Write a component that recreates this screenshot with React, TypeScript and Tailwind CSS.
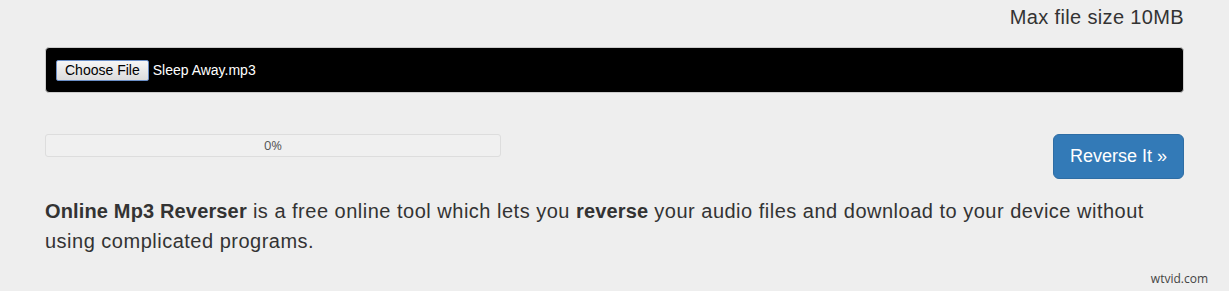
export default function App() {
  return (
    <div className="relative w-full h-[291px] bg-[#eeeeee] px-[45px] pt-[4px] font-['Liberation_Sans',Arial,sans-serif] text-[#333333] overflow-hidden">
      {/* max size note */}
      <div className="text-right text-[20px] leading-[26px] tracking-[0.35px]">Max file size 10MB</div>

      {/* file picker */}
      <div className="mt-[17px] h-[46px] bg-black border border-[#cccccc] rounded-[4px] flex items-center px-[10px] gap-[4px]">
        <span className="h-[21px] px-[8px] flex items-center text-[14px] text-black border border-[#6b8fc7] rounded-[2px] bg-gradient-to-b from-[#f6f6f6] to-[#dcdcdc]">
          Choose File
        </span>
        <span className="text-[14px] text-white">Sleep Away.mp3</span>
      </div>

      {/* progress + action */}
      <div className="mt-[41px] flex items-start justify-between">
        <div className="w-[456px] h-[23px] border border-[#dddddd] rounded-[3px] bg-[#f0f0f0] flex items-center justify-center text-[13px] text-[#555555] font-['Open_Sans',sans-serif]">
          0%
        </div>
        <button className="w-[131px] h-[45px] bg-[#337ab7] border border-[#2e6da4] rounded-[6px] text-white text-[18px]">
          Reverse It »
        </button>
      </div>

      <p className="mt-[17px] text-[20px] leading-[30px] tracking-[0.5px]">
        <b className="tracking-[0.15px]">Online Mp3 Reverser</b> is a free online tool which lets you <b className="tracking-[0.15px]">reverse</b> your audio files and download to your device without using complicated programs.
      </p>

      <span className="absolute right-[21px] bottom-[3px] text-[12px] text-[#444444] font-['Open_Sans',sans-serif]">wtvid.com</span>
    </div>
  );
}
